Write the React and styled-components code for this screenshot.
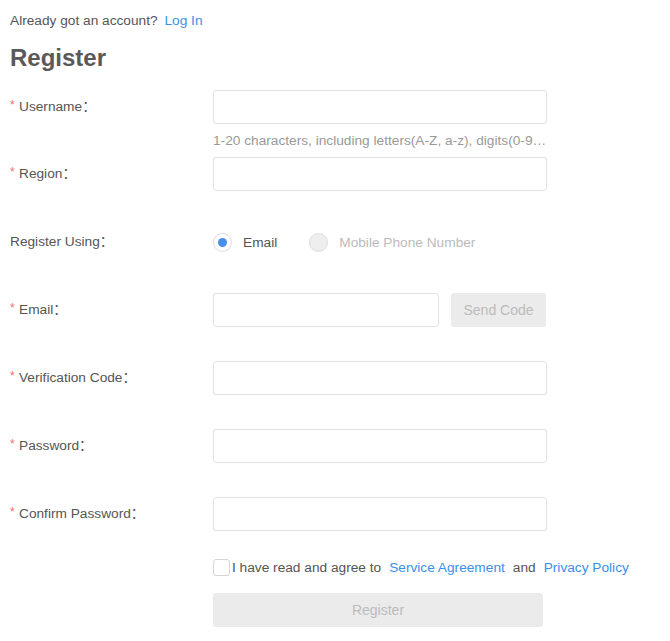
import React, { useState } from 'react';
import styled, { createGlobalStyle } from 'styled-components';

const GlobalStyle = createGlobalStyle`
  body {
    margin: 0;
    background: #fff;
    font-family: "Liberation Sans", Arial, "Noto Sans CJK SC", sans-serif;
    font-size: 13.7px;
    color: #555;
  }
`;

const Page = styled.div`
  padding: 11px 10px;
`;

const TopLine = styled.div`
  height: 20px;
  line-height: 20px;
  color: #555;
`;

const Link = styled.a`
  color: #3b8fe8;
  text-decoration: none;
  cursor: pointer;
  margin: 0 ${(props) => props.gap || 0}px;
`;

const Title = styled.h1`
  margin: 12px 0 17px;
  font-size: 24px;
  line-height: 30px;
  font-weight: bold;
  color: #595959;
`;

const Row = styled.div`
  display: grid;
  grid-template-columns: 203px 334px;
  align-items: center;
  height: 34px;
  margin-bottom: ${(props) => (props.tight ? 0 : 34)}px;
`;

const Label = styled.label`
  display: flex;
  align-items: center;
  color: #555;
  position: relative;
  top: -2px;
`;

const Star = styled.span`
  color: #f56c6c;
  width: 9px;
  font-size: 12px;
  position: relative;
  top: 0;
`;

const Input = styled.input`
  box-sizing: border-box;
  width: ${(props) => props.width || 334}px;
  height: 34px;
  border: 1px solid #e3e3e3;
  border-radius: 3px;
  outline: none;
  padding: 0 10px;
  font: inherit;
`;

const Hint = styled.div`
  margin-left: 203px;
  width: 334px;
  height: 33px;
  line-height: 34px;
  color: #999;
  white-space: nowrap;
  overflow: hidden;
  text-overflow: ellipsis;
`;

const Inline = styled.div`
  display: flex;
  align-items: center;
  gap: ${(props) => props.gap || 12}px;
`;

const GrayButton = styled.button`
  box-sizing: border-box;
  width: ${(props) => props.width}px;
  height: 34px;
  border: none;
  border-radius: 3px;
  background: #ebebeb;
  color: #bbb;
  font: inherit;
  font-size: 14px;
  cursor: not-allowed;
`;

const RadioOption = styled.label`
  display: flex;
  align-items: center;
  gap: 11px;
  margin-right: 20px;
  color: ${(props) => (props.disabled ? '#bbb' : '#555')};
`;

const RadioDot = styled.span`
  box-sizing: border-box;
  width: 19px;
  height: 19px;
  border-radius: 50%;
  border: 1px solid #dcdcdc;
  background: ${(props) => (props.disabled ? '#eee' : '#fff')};
  display: flex;
  align-items: center;
  justify-content: center;

  &::after {
    content: '';
    width: 9px;
    height: 9px;
    border-radius: 50%;
    background: ${(props) => (props.checked ? '#4a8fe7' : 'transparent')};
  }
`;

const Agree = styled.div`
  display: flex;
  align-items: center;
  margin: 27px 0 0 203px;
  height: 18px;
  color: #555;
  white-space: nowrap;
`;

const Checkbox = styled.span`
  box-sizing: border-box;
  width: 17px;
  height: 17px;
  border: 1px solid #d5d5d5;
  border-radius: 3px;
  margin-right: 2px;
`;

const Submit = styled.div`
  margin: 17px 0 0 203px;
`;

function Field({ label, required, children, tight }) {
  return (
    <Row tight={tight}>
      <Label>
        {required ? <Star>*</Star> : null}
        {label}：
      </Label>
      {children}
    </Row>
  );
}

export default function App() {
  const [method, setMethod] = useState('email');

  return (
    <Page>
      <GlobalStyle />
      <TopLine>
        Already got an account? <Link gap={3}>Log In</Link>
      </TopLine>
      <Title>Register</Title>

      <Field label="Username" required tight>
        <Input />
      </Field>
      <Hint>1-20 characters, including letters(A-Z, a-z), digits(0-9), underscores(_)</Hint>

      <Field label="Region" required>
        <Input />
      </Field>

      <Field label="Register Using">
        <Inline gap={0}>
          <RadioOption onClick={() => setMethod('email')}>
            <RadioDot checked={method === 'email'} />
            Email
          </RadioOption>
          <RadioOption disabled>
            <RadioDot disabled />
            Mobile Phone Number
          </RadioOption>
        </Inline>
      </Field>

      <Field label="Email" required>
        <Inline>
          <Input width={226} />
          <GrayButton width={95}>Send Code</GrayButton>
        </Inline>
      </Field>

      <Field label="Verification Code" required>
        <Input />
      </Field>

      <Field label="Password" required>
        <Input type="password" />
      </Field>

      <Field label="Confirm Password" required tight>
        <Input type="password" />
      </Field>

      <Agree>
        <Checkbox />
        I have read and agree to <Link gap={8}>Service Agreement</Link>and
        <Link gap={8}>Privacy Policy</Link>
      </Agree>

      <Submit>
        <GrayButton width={330}>Register</GrayButton>
      </Submit>
    </Page>
  );
}
